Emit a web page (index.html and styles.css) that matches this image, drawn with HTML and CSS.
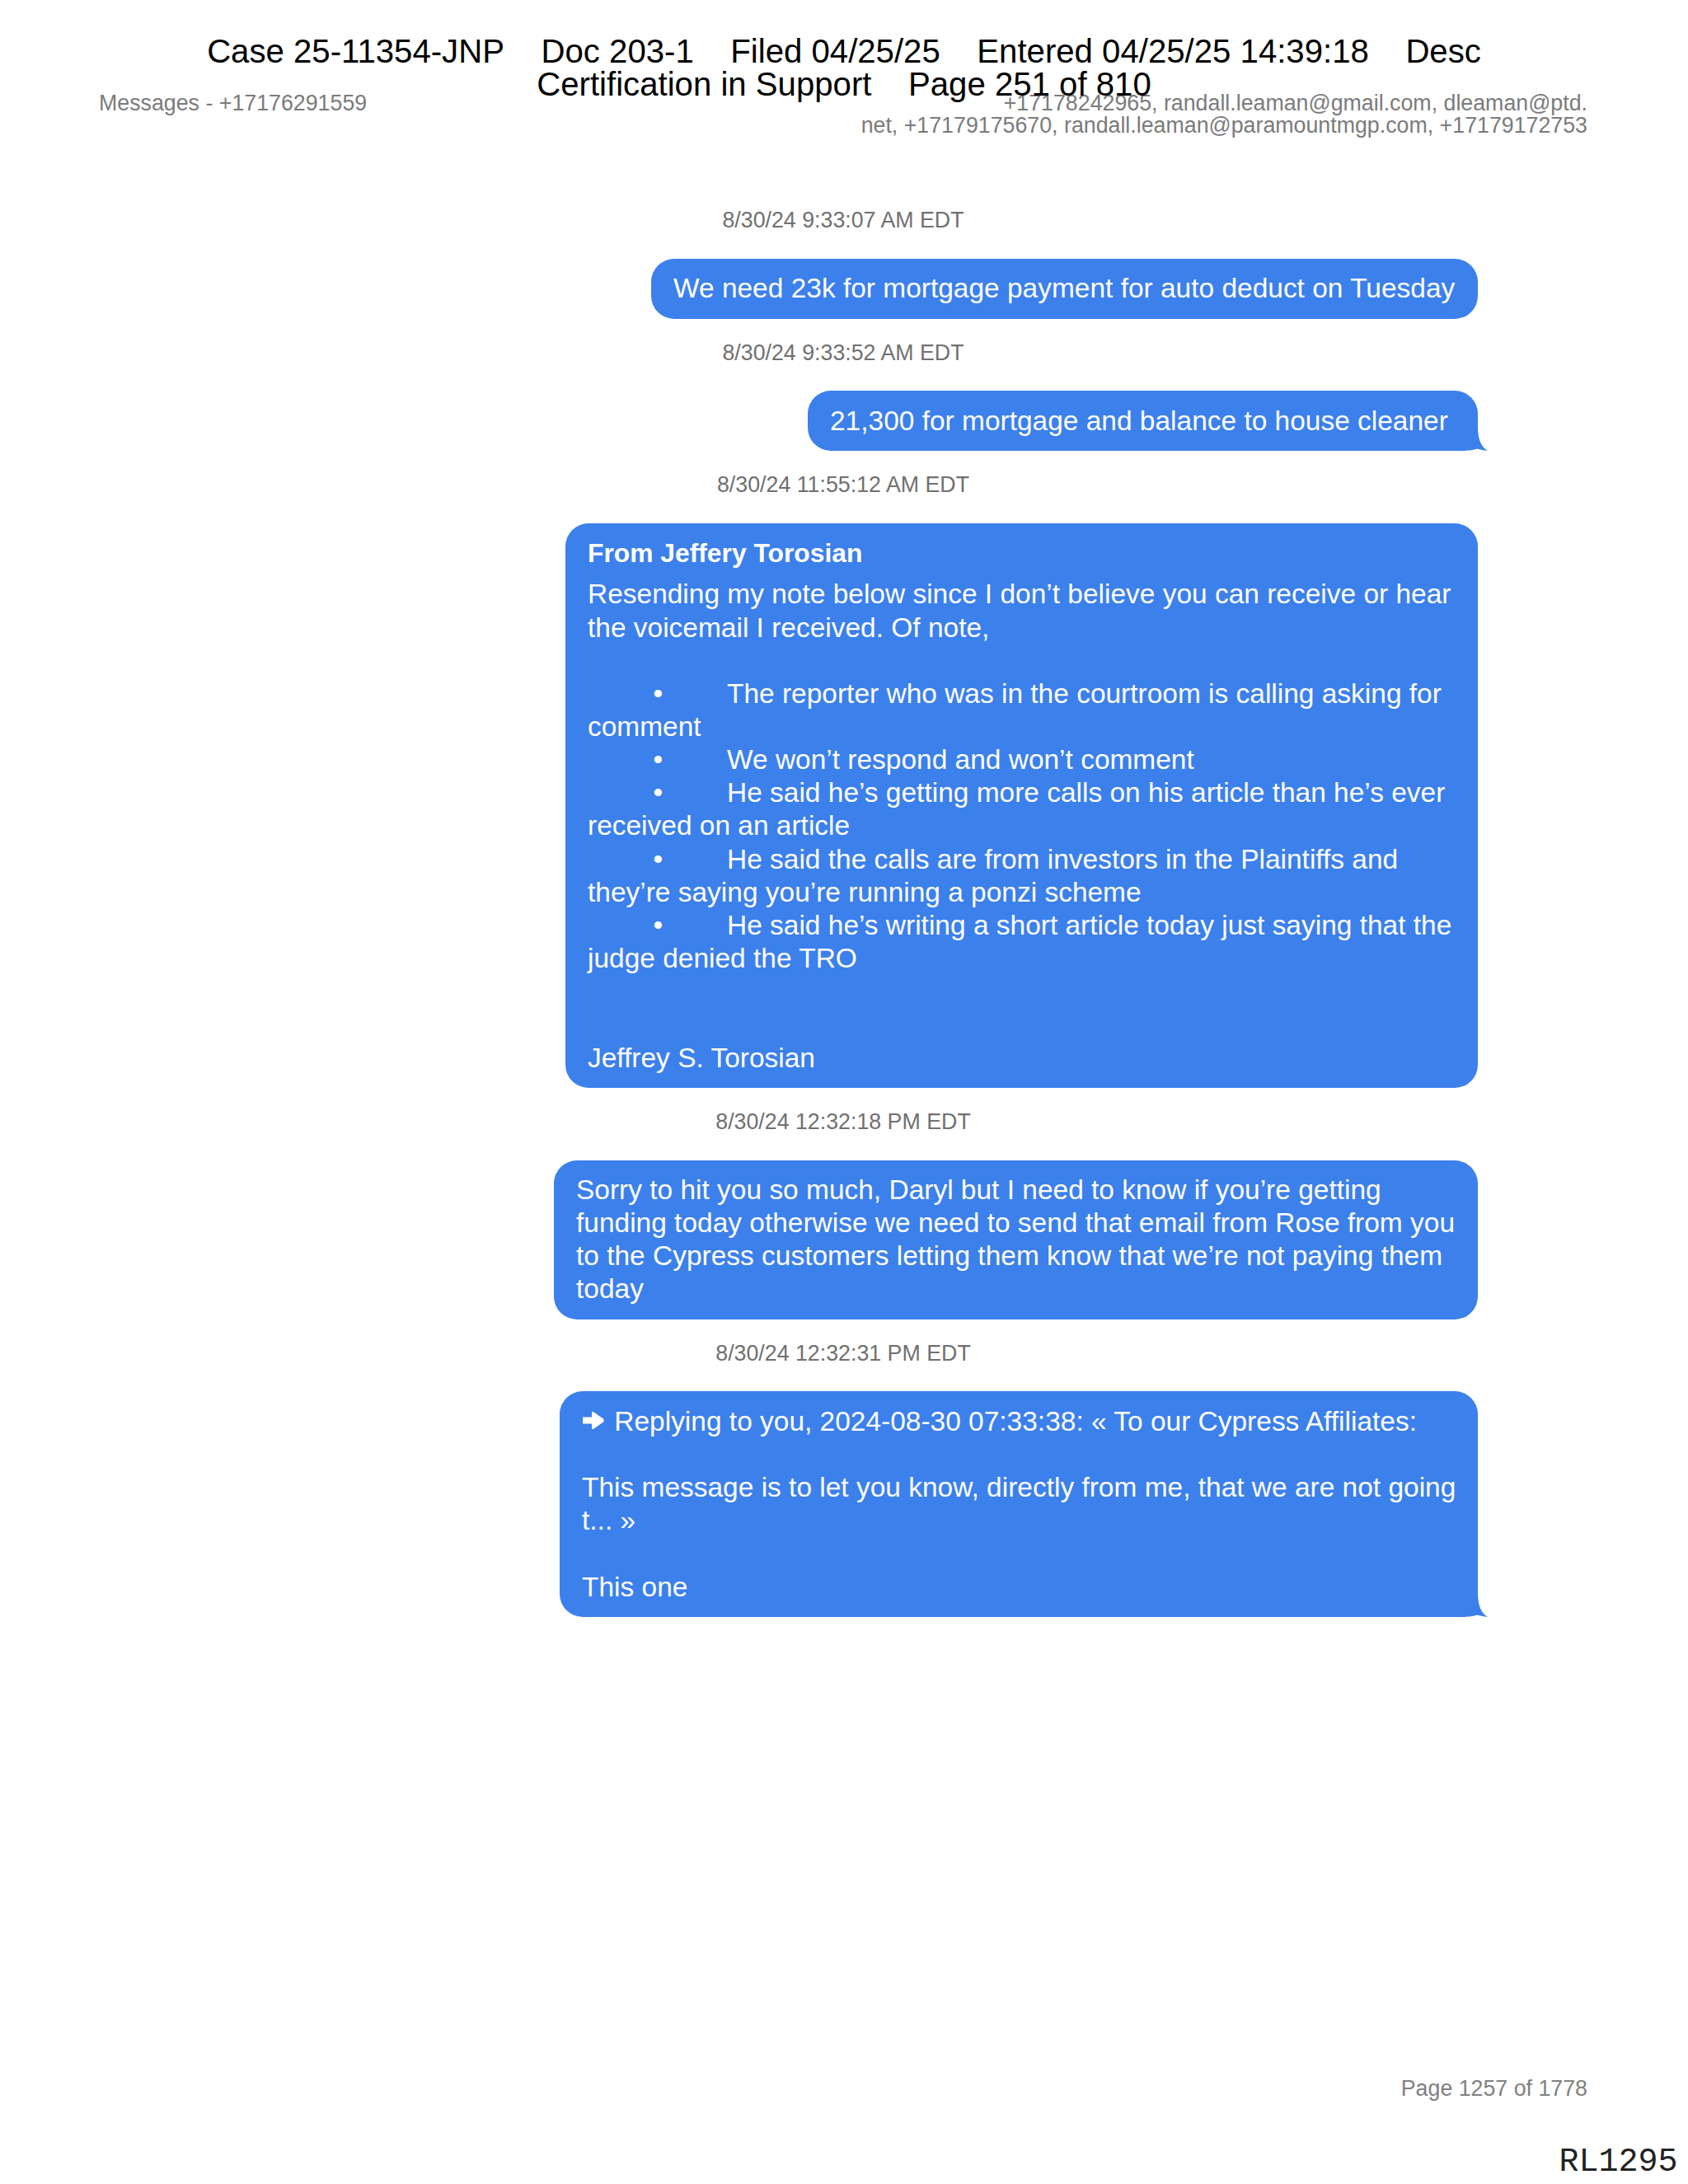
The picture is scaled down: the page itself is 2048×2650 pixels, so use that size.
FILE: index.html
```
<!DOCTYPE html>
<html lang="en">
<head>
<meta charset="utf-8">
<title>Messages - +17176291559</title>
<link rel="stylesheet" href="styles.css">
</head>
<body>
<div class="stamp">
  <div class="stamp-row"><span>Case 25-11354-JNP</span><span>Doc 203-1</span><span>Filed 04/25/25</span><span>Entered 04/25/25 14:39:18</span><span>Desc</span></div>
  <div class="stamp-row"><span>Certification in Support</span><span>Page 251 of 810</span></div>
</div>
<div class="page">
  <div class="topbar">
    <div class="title">Messages - +17176291559</div>
    <div class="recips">+17178242965, randall.leaman@gmail.com, dleaman@ptd.<br>net, +17179175670, randall.leaman@paramountmgp.com, +17179172753</div>
  </div>
  <div class="thread">
    <div class="ts">8/30/24 9:33:07 AM EDT</div>
    <div class="bubble w1"><div class="txt">We need 23k for mortgage payment for auto deduct on Tuesday</div></div>
    <div class="ts">8/30/24 9:33:52 AM EDT</div>
    <div class="bubble w2"><div class="txt">21,300 for mortgage and balance to house cleaner</div><svg class="tail" viewBox="0 0 40 40"><path d="M0 0H28V10C28 22 30 34 40 40C35 39.6 31 38.6 27 37.6C22 39.5 16 40 0 40Z"/></svg></div>
    <div class="ts">8/30/24 11:55:12 AM EDT</div>
    <div class="bubble w3"><div class="from">From Jeffery Torosian</div><div class="txt">Resending my note below since I don’t believe you can receive or hear<br>the voicemail I received. Of note,<br><br>&#9;<span class="bul">•</span>&#9;The reporter who was in the courtroom is calling asking for<br>comment<br>&#9;<span class="bul">•</span>&#9;We won’t respond and won’t comment<br>&#9;<span class="bul">•</span>&#9;He said he’s getting more calls on his article than he’s ever<br>received on an article<br>&#9;<span class="bul">•</span>&#9;He said the calls are from investors in the Plaintiffs and<br>they’re saying you’re running a ponzi scheme<br>&#9;<span class="bul">•</span>&#9;He said he’s writing a short article today just saying that the<br>judge denied the TRO<br><br><br>Jeffrey S. Torosian</div></div>
    <div class="ts">8/30/24 12:32:18 PM EDT</div>
    <div class="bubble w4"><div class="txt">Sorry to hit you so much, Daryl but I need to know if you’re getting<br>funding today otherwise we need to send that email from Rose from you<br>to the Cypress customers letting them know that we’re not paying them<br>today</div></div>
    <div class="ts">8/30/24 12:32:31 PM EDT</div>
    <div class="bubble w5"><div class="txt"><svg class="reply" viewBox="0 0 28 25"><path d="M1 8.5H12V3.5Q12 1 14.2 2.3L26 10.6Q27.8 12.5 26 14.4L14.2 22.7Q12 24 12 21.5V16.5H1Z"/></svg> Replying to you, 2024-08-30 07:33:38: « To our Cypress Affiliates:<br><br>This message is to let you know, directly from me, that we are not going<br>t... »<br><br>This one</div><svg class="tail" viewBox="0 0 40 40"><path d="M0 0H28V10C28 22 30 34 40 40C35 39.6 31 38.6 27 37.6C22 39.5 16 40 0 40Z"/></svg></div>
  </div>
  <div class="footer">
    <div class="pageno">Page 1257 of 1778</div>
    <div class="bates">RL1295</div>
  </div>
</div>
</body>
</html>
```
FILE: styles.css
```
html, body {
  margin: 0;
  padding: 0;
}
body {
  width: 2048px;
  height: 2650px;
  position: relative;
  display: flex;
  flex-direction: column;
  overflow: hidden;
  background: #ffffff;
  color: #000000;
  font-family: "Liberation Sans", Arial, sans-serif;
}
.stamp {
  position: absolute;
  top: 43px;
  left: 0;
  right: 0;
  z-index: 2;
  font-size: 40.16px;
  line-height: 40px;
  color: #000000;
}
.stamp-row {
  display: flex;
  justify-content: center;
  gap: 44.5px;
  white-space: nowrap;
}
.page {
  flex: 1;
  display: flex;
  flex-direction: column;
  padding: 0 122px 0 120px;
}
.topbar {
  margin-top: 111.7px;
  display: flex;
  justify-content: space-between;
  align-items: flex-start;
  font-size: 26.78px;
  line-height: 27px;
  color: #7b7b7b;
  white-space: nowrap;
}
.recips {
  text-align: right;
}
.thread {
  padding-top: 60.8px;
  display: flex;
  flex-direction: column;
}
.ts {
  margin-top: 24.85px;
  margin-bottom: 30.65px;
  text-align: center;
  font-size: 26.78px;
  line-height: 32px;
  color: #707070;
}
.bubble {
  align-self: flex-end;
  margin-right: 133px;
  box-sizing: border-box;
  position: relative;
  background: #3c80ec;
  color: #ffffff;
  border-radius: 28px;
  padding: 16.4px 0 16.4px 27px;
  font-size: 33.47px;
  line-height: 40.16px;
}
.w1 { width: 1003px; }
.w2 { width: 813px; }
.w3 { width: 1107px; }
.w4 { width: 1121px; }
.w5 { width: 1114px; }
.txt {
  white-space: pre;
  tab-size: 84.5px;
}
.bul {
  margin-left: -5px;
}
.from {
  font-weight: bold;
  font-size: 31.8px;
  line-height: 40.16px;
  margin-bottom: 10px;
  white-space: nowrap;
}
.tail {
  position: absolute;
  right: -12px;
  bottom: 0;
  width: 40px;
  height: 40px;
  fill: #3c80ec;
}
.reply {
  display: inline-block;
  width: 28px;
  height: 25px;
  margin-right: 2px;
  fill: #ffffff;
  vertical-align: baseline;
}
.footer {
  margin-top: auto;
  padding-bottom: 4px;
}
.pageno {
  text-align: right;
  font-size: 26.78px;
  line-height: 32px;
  color: #808080;
}
.bates {
  margin-top: 51px;
  margin-right: -109.5px;
  text-align: right;
  font-family: "Liberation Mono", "Courier New", monospace;
  font-size: 40px;
  line-height: 45.3px;
  color: #222222;
}
```
